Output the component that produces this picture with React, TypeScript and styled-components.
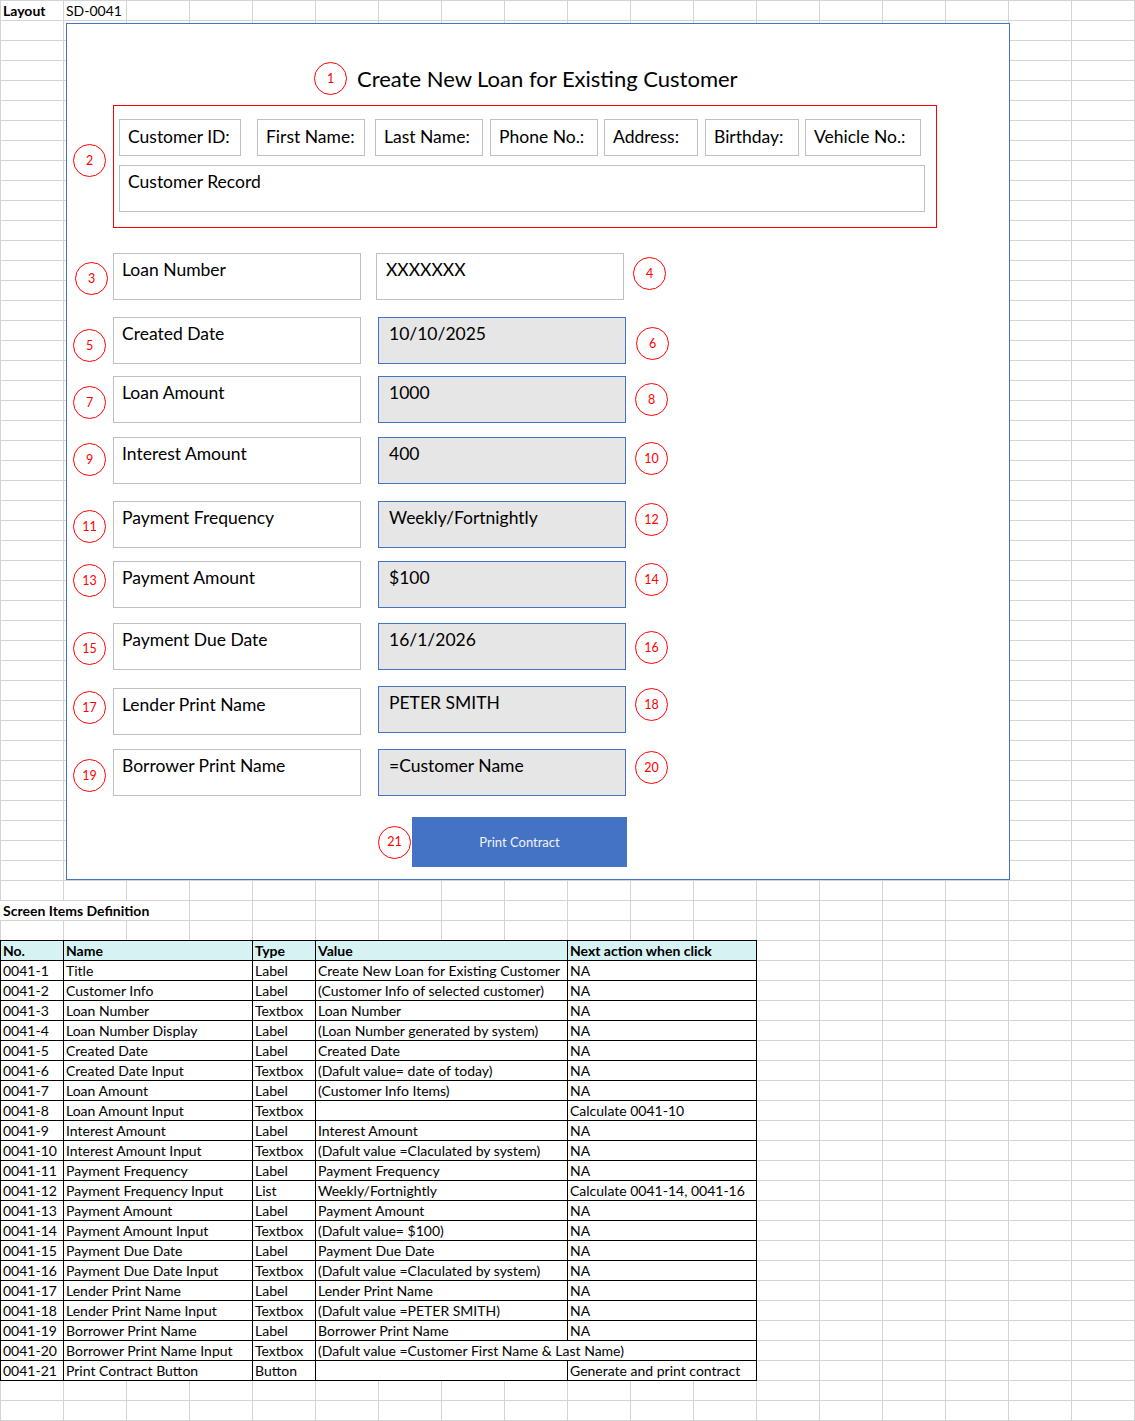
import React from 'react';
import styled, { createGlobalStyle } from 'styled-components';

const FONT = `Lato, "Noto Sans", "Liberation Sans", sans-serif`;

const GlobalStyle = createGlobalStyle`
  html, body { margin: 0; padding: 0; background: #ffffff; }
  body { font-family: ${FONT}; color: #000000; }
  * { box-sizing: border-box; }
`;

const Sheet = styled.div`
  width: 1135px;
  height: 1421px;
  overflow: hidden;
  background-color: #ffffff;
  background-image:
    linear-gradient(to right, #d4d4d4 1px, transparent 1px),
    linear-gradient(to bottom, #d4d4d4 1px, transparent 1px);
  background-size: 63px 20px;
  display: flex;
  flex-direction: column;
`;

const TopRow = styled.div`
  display: flex;
  height: 20px;
`;

const SheetCell = styled.div<{ $w: number; $bold?: boolean }>`
  width: ${(p) => p.$w}px;
  padding-left: 3px;
  font-size: 14px;
  line-height: 22px;
  font-weight: ${(p) => (p.$bold ? 700 : 400)};
  white-space: nowrap;
`;

const Frame = styled.section`
  margin: 3px 0 0 66px;
  width: 944px;
  height: 857px;
  border: 1px solid #4472c4;
  background: #ffffff;
  display: flex;
  flex-direction: column;
  padding-top: 38px;
`;

const TitleRow = styled.div`
  display: flex;
  align-items: center;
  padding-left: 247px;
  gap: 10px;
  height: 33px;
`;

const Title = styled.h1`
  margin: 0;
  font-size: 22px;
  font-weight: 400;
  line-height: 32px;
  white-space: nowrap;
`;

const Badge = styled.div<{ $ml?: number; $mt?: number }>`
  flex: none;
  width: 33px;
  height: 33px;
  margin-left: ${(p) => p.$ml ?? 0}px;
  margin-top: ${(p) => p.$mt ?? 0}px;
  border: 1px solid #ff0000;
  border-radius: 50%;
  background: #ffffff;
  color: #ff0000;
  font-size: 12.5px;
  padding-top: 1px;
  display: flex;
  align-items: center;
  justify-content: center;
  line-height: 1;
`;

const InfoRow = styled.div`
  display: flex;
  align-items: flex-start;
  margin-top: 10px;
`;

const InfoBox = styled.div`
  margin-left: 7px;
  width: 824px;
  height: 123px;
  border: 1px solid #ff0000;
  padding: 13px 0 0 5px;
  display: flex;
  flex-direction: column;
  gap: 9px;
`;

const FieldRow = styled.div`
  display: flex;
`;

const Field = styled.div<{ $w: number; $ml: number }>`
  width: ${(p) => p.$w}px;
  margin-left: ${(p) => p.$ml}px;
  height: 37px;
  border: 1px solid #bfbfbf;
  padding: 0 0 2px 8px;
  display: flex;
  align-items: center;
  font-size: 17.5px;
  white-space: nowrap;
`;

const RecordBox = styled.div`
  width: 806px;
  height: 47px;
  border: 1px solid #bfbfbf;
  padding: 5px 8px;
  font-size: 17.5px;
  line-height: 22px;
`;

const LoanList = styled.div`
  display: flex;
  flex-direction: column;
`;

const LoanRow = styled.div<{ $mt: number }>`
  display: flex;
  align-items: flex-start;
  margin-top: ${(p) => p.$mt}px;
`;

const BadgeSlot = styled.div`
  width: 46px;
  flex: none;
  display: flex;
  align-items: flex-start;
`;

const TextBox = styled.div<{ $filled?: boolean; $ml?: number; $mt?: number; $pl?: number }>`
  flex: none;
  width: 248px;
  height: 47px;
  margin-left: ${(p) => p.$ml ?? 0}px;
  margin-top: ${(p) => p.$mt ?? 0}px;
  border: 1px solid ${(p) => (p.$filled ? '#4472c4' : '#bfbfbf')};
  background: ${(p) => (p.$filled ? '#e7e6e6' : '#ffffff')};
  padding: 5px 0 0 ${(p) => p.$pl ?? 8}px;
  font-size: 17.5px;
  line-height: 22px;
  white-space: nowrap;
`;

const ButtonRow = styled.div`
  display: flex;
  align-items: center;
  margin-top: 21px;
  padding-left: 311px;
  gap: 1px;
`;

const PrintButton = styled.button`
  width: 215px;
  height: 50px;
  border: none;
  background: #4472c4;
  color: #f2f2f2;
  font-family: ${FONT};
  font-size: 13px;
  padding: 0;
  cursor: pointer;
`;

const SectionTitle = styled.div`
  margin-top: 21px;
  width: 189px;
  height: 19px;
  background: #ffffff;
  padding-left: 3px;
  font-size: 14px;
  font-weight: 700;
  line-height: 20px;
  white-space: nowrap;
`;

const DefTable = styled.div`
  margin-top: 20px;
  width: 757px;
  border-top: 1px solid #000000;
  border-left: 1px solid #000000;
`;

const DefRow = styled.div<{ $head?: boolean }>`
  display: grid;
  grid-template-columns: 63px 189px 63px 252px 189px;
  height: 20px;
  background: ${(p) => (p.$head ? '#d6f2f2' : '#ffffff')};
  font-weight: ${(p) => (p.$head ? 700 : 400)};
`;

const DefCell = styled.div<{ $span?: number }>`
  grid-column: span ${(p) => p.$span ?? 1};
  border-right: 1px solid #000000;
  border-bottom: 1px solid #000000;
  padding-left: 2px;
  font-size: 14px;
  line-height: 20px;
  white-space: nowrap;
  overflow: hidden;
`;

type Loan = {
  n: number;
  label: string;
  value: string;
  mt: number;
  lx: number;
  ly: number;
  vl: number;
  vt: number;
  rx: number;
  ry: number;
  plain?: boolean;
};

const FRAME_X = 67;
const R = 16.5;

const loans: Loan[] = [
  { n: 3, label: 'Loan Number', value: 'XXXXXXX', mt: 25, lx: 91, ly: 278, vl: 376, vt: 253, rx: 649, ry: 273, plain: true },
  { n: 5, label: 'Created Date', value: '10/10/2025', mt: 17, lx: 89, ly: 345, vl: 378, vt: 317, rx: 652, ry: 343 },
  { n: 7, label: 'Loan Amount', value: '1000', mt: 12, lx: 89, ly: 402, vl: 378, vt: 376, rx: 651, ry: 399 },
  { n: 9, label: 'Interest Amount', value: '400', mt: 14, lx: 89, ly: 459, vl: 378, vt: 437, rx: 651, ry: 458 },
  { n: 11, label: 'Payment Frequency', value: 'Weekly/Fortnightly', mt: 17, lx: 89, ly: 526, vl: 378, vt: 501, rx: 651, ry: 519 },
  { n: 13, label: 'Payment Amount', value: '$100', mt: 13, lx: 89, ly: 580, vl: 378, vt: 561, rx: 651, ry: 579 },
  { n: 15, label: 'Payment Due Date', value: '16/1/2026', mt: 15, lx: 89, ly: 648, vl: 378, vt: 623, rx: 651, ry: 647 },
  { n: 17, label: 'Lender Print Name', value: 'PETER SMITH', mt: 18, lx: 89, ly: 707, vl: 378, vt: 686, rx: 651, ry: 704 },
  { n: 19, label: 'Borrower Print Name', value: '=Customer Name', mt: 14, lx: 89, ly: 775, vl: 378, vt: 749, rx: 651, ry: 767 },
];

const loanTops = [253, 317, 376, 437, 501, 561, 623, 688, 749];

const fields = [
  { t: 'Customer ID:', w: 122, ml: 0 },
  { t: 'First Name:', w: 108, ml: 16 },
  { t: 'Last Name:', w: 108, ml: 10 },
  { t: 'Phone No.:', w: 108, ml: 7 },
  { t: 'Address:', w: 94, ml: 6 },
  { t: 'Birthday:', w: 94, ml: 7 },
  { t: 'Vehicle No.:', w: 116, ml: 6 },
];

const head = ['No.', 'Name', 'Type', 'Value', 'Next action when click'];

const defs: (string | null)[][] = [
  ['0041-1', 'Title', 'Label', 'Create New Loan for Existing Customer', 'NA'],
  ['0041-2', 'Customer Info', 'Label', '(Customer Info of selected customer)', 'NA'],
  ['0041-3', 'Loan Number', 'Textbox', 'Loan Number', 'NA'],
  ['0041-4', 'Loan Number Display', 'Label', '(Loan Number generated by system)', 'NA'],
  ['0041-5', 'Created Date', 'Label', 'Created Date', 'NA'],
  ['0041-6', 'Created Date Input', 'Textbox', '(Dafult value= date of today)', 'NA'],
  ['0041-7', 'Loan Amount', 'Label', '(Customer Info Items)', 'NA'],
  ['0041-8', 'Loan Amount Input', 'Textbox', '', 'Calculate 0041-10'],
  ['0041-9', 'Interest Amount', 'Label', 'Interest Amount', 'NA'],
  ['0041-10', 'Interest Amount Input', 'Textbox', '(Dafult value =Claculated by system)', 'NA'],
  ['0041-11', 'Payment Frequency', 'Label', 'Payment Frequency', 'NA'],
  ['0041-12', 'Payment Frequency Input', 'List', 'Weekly/Fortnightly', 'Calculate 0041-14, 0041-16'],
  ['0041-13', 'Payment Amount', 'Label', 'Payment Amount', 'NA'],
  ['0041-14', 'Payment Amount Input', 'Textbox', '(Dafult value= $100)', 'NA'],
  ['0041-15', 'Payment Due Date', 'Label', 'Payment Due Date', 'NA'],
  ['0041-16', 'Payment Due Date Input', 'Textbox', '(Dafult value =Claculated by system)', 'NA'],
  ['0041-17', 'Lender Print Name', 'Label', 'Lender Print Name', 'NA'],
  ['0041-18', 'Lender Print Name Input', 'Textbox', '(Dafult value =PETER SMITH)', 'NA'],
  ['0041-19', 'Borrower Print Name', 'Label', 'Borrower Print Name', 'NA'],
  ['0041-20', 'Borrower Print Name Input', 'Textbox', '(Dafult value =Customer First Name & Last Name)', null],
  ['0041-21', 'Print Contract Button', 'Button', '', 'Generate and print contract'],
];

export default function App() {
  return (
    <>
      <GlobalStyle />
      <Sheet>
        <TopRow>
          <SheetCell $w={63} $bold>Layout</SheetCell>
          <SheetCell $w={126}>SD-0041</SheetCell>
        </TopRow>

        <Frame>
          <TitleRow>
            <Badge>1</Badge>
            <Title>Create New Loan for Existing Customer</Title>
          </TitleRow>

          <InfoRow>
            <Badge $ml={6} $mt={39}>2</Badge>
            <InfoBox>
              <FieldRow>
                {fields.map((f) => (
                  <Field key={f.t} $w={f.w} $ml={f.ml}>{f.t}</Field>
                ))}
              </FieldRow>
              <RecordBox>Customer Record</RecordBox>
            </InfoBox>
          </InfoRow>

          <LoanList>
            {loans.map((l, i) => {
              const top = loanTops[i];
              const rowTop = Math.min(top, l.vt);
              const labelMt = top - rowTop;
              const valueMt = l.vt - rowTop;
              const valueRight = l.vl + 248;
              return (
                <LoanRow key={l.n} $mt={l.mt - (top - rowTop)}>
                  <BadgeSlot>
                    <Badge $ml={Math.round(l.lx - R - FRAME_X)} $mt={Math.round(l.ly - R - rowTop)}>
                      {l.n}
                    </Badge>
                  </BadgeSlot>
                  <TextBox $mt={labelMt}>{l.label}</TextBox>
                  <TextBox
                    $filled={!l.plain}
                    $ml={l.vl - 361}
                    $mt={valueMt}
                    $pl={l.plain ? 9 : 10}
                  >
                    {l.value}
                  </TextBox>
                  <Badge $ml={Math.round(l.rx - R - valueRight)} $mt={Math.round(l.ry - R - rowTop)}>
                    {l.n + 1}
                  </Badge>
                </LoanRow>
              );
            })}
          </LoanList>

          <ButtonRow>
            <Badge>21</Badge>
            <PrintButton type="button">Print Contract</PrintButton>
          </ButtonRow>
        </Frame>

        <SectionTitle>Screen Items Definition</SectionTitle>

        <DefTable>
          <DefRow $head>
            {head.map((h) => (
              <DefCell key={h}>{h}</DefCell>
            ))}
          </DefRow>
          {defs.map((r) => (
            <DefRow key={r[0] as string}>
              <DefCell>{r[0]}</DefCell>
              <DefCell>{r[1]}</DefCell>
              <DefCell>{r[2]}</DefCell>
              {r[4] === null ? (
                <DefCell $span={2}>{r[3]}</DefCell>
              ) : (
                <>
                  <DefCell>{r[3]}</DefCell>
                  <DefCell>{r[4]}</DefCell>
                </>
              )}
            </DefRow>
          ))}
        </DefTable>
      </Sheet>
    </>
  );
}
